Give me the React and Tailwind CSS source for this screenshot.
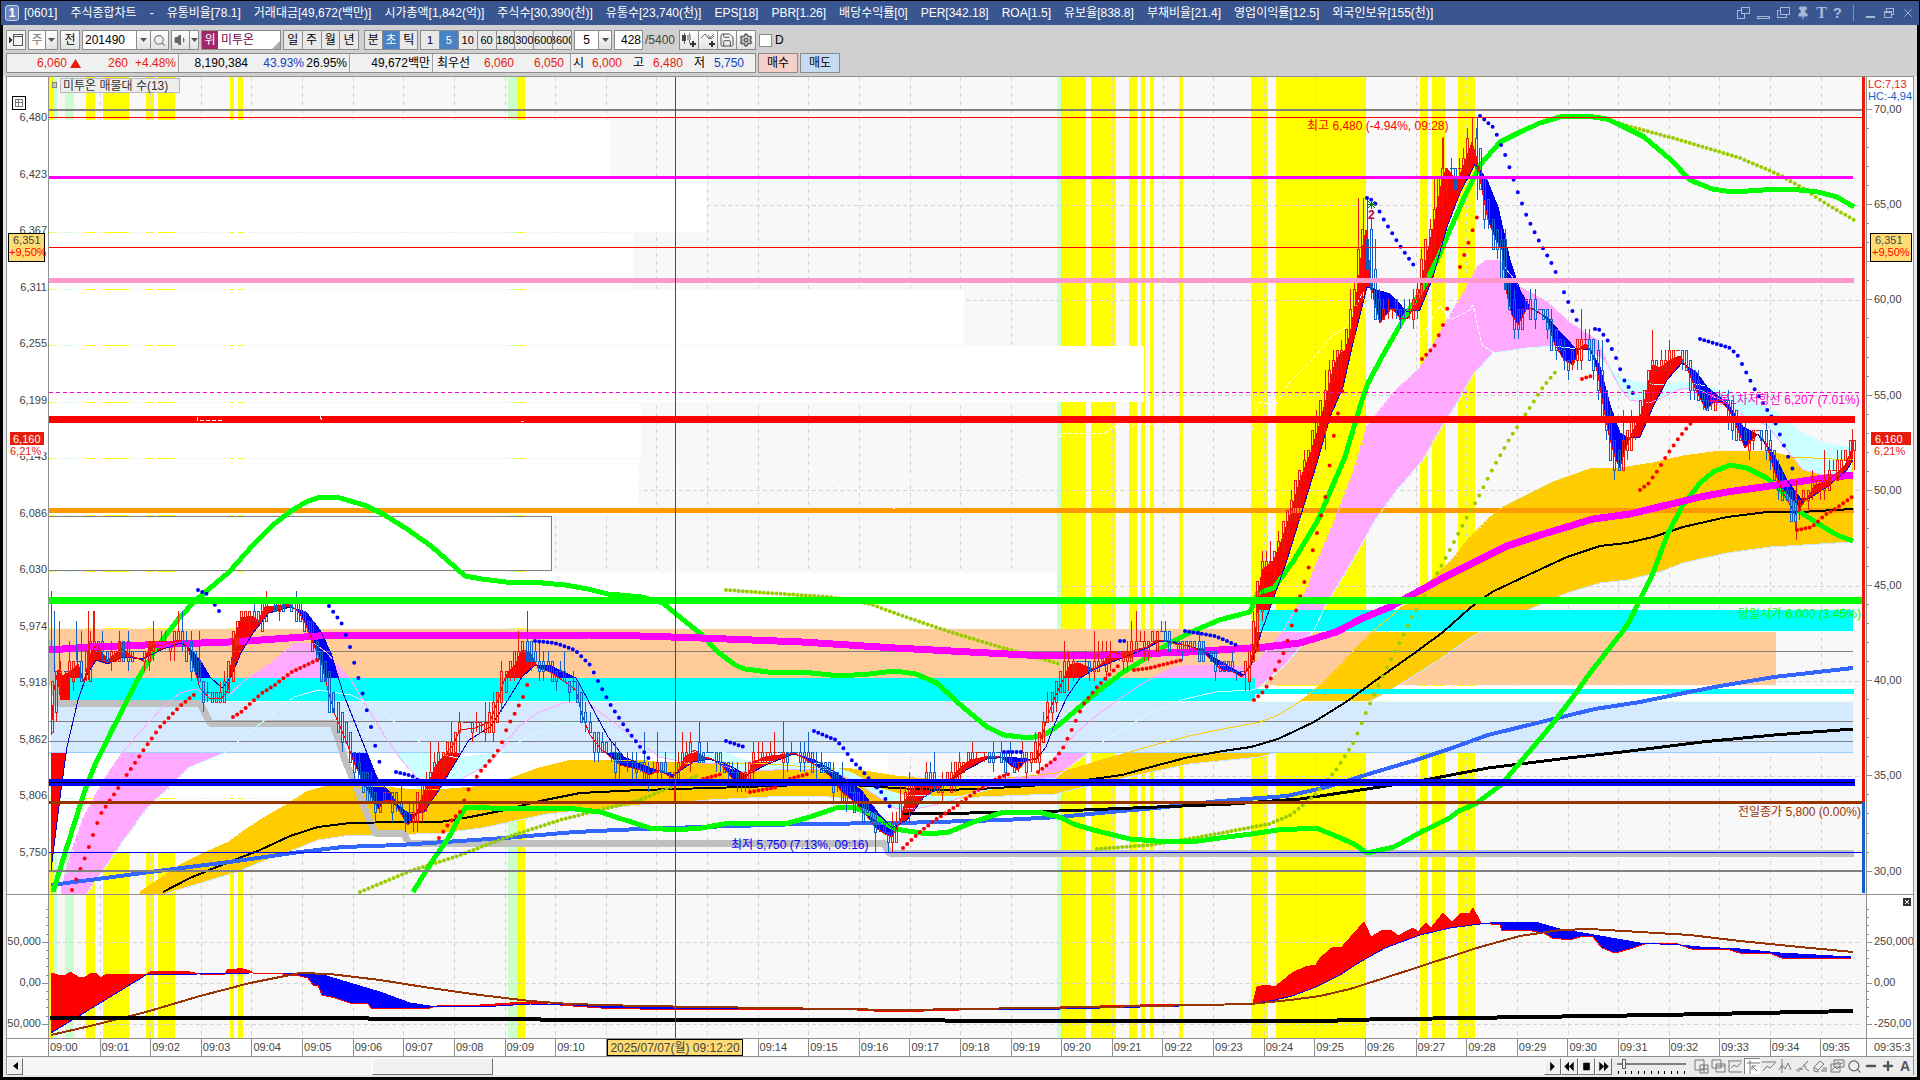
import { Fragment } from "react";
import { Search, Volume1, Save, Settings, Pin, X, Minus, Plus } from "lucide-react";

const FONT = "font-['Liberation_Sans','Noto_Sans_CJK_KR',sans-serif]";

// "x,y x,y ..." -> [[x, y], ...]
const pts = (str) => str.trim().split(/\s+/).map((p) => p.split(",").map(Number));

const valueAt = (line, x) => {
  if (x <= line[0][0]) return line[0][1];
  for (let i = 1; i < line.length; i++) {
    if (x <= line[i][0]) {
      const [x0, y0] = line[i - 1];
      const [x1, y1] = line[i];
      return y0 + ((y1 - y0) * (x - x0)) / (x1 - x0 || 1);
    }
  }
  return line[line.length - 1][1];
};

// vertical strokes between two lines, split by which one is on top
const fillBetween = (a, b, step, from, to) => {
  let up = "";
  let down = "";
  for (let x = from; x <= to; x += step) {
    const ya = Math.round(valueAt(a, x));
    const yb = Math.round(valueAt(b, x));
    if (ya < yb) up += `M${x} ${ya}V${yb}`;
    if (ya > yb) down += `M${x} ${yb}V${ya}`;
  }
  return { up, down };
};

const dotPath = (line, step) => {
  let d = "";
  for (let x = line[0][0]; x <= line[line.length - 1][0]; x += step) {
    d += `M${x.toFixed(1)} ${valueAt(line, x).toFixed(1)}h0.01`;
  }
  return d;
};

const noise = (i) => {
  const v = Math.sin(i * 12.9898) * 43758.5453;
  return v - Math.floor(v);
};

const BANDS = [
  [49, 4, 1], [53, 4, 0], [65, 9, 0], [86, 9, 1], [103, 26, 1], [146, 8, 1], [158, 17, 1],
  [230, 4, 1], [238, 5, 1], [508, 9, 0], [517, 8, 1], [1057, 4, 0], [1061, 25, 1], [1091, 25, 1],
  [1129, 8, 1], [1141, 4, 1], [1150, 4, 1], [1179, 4, 1], [1251, 17, 1], [1276, 90, 1],
  [1420, 8, 1], [1432, 13, 1], [1458, 17, 1],
];

const PROFILE = [
  [120, 56, 610], [177, 55, 707], [233, 56, 633], [290, 55, 964], [346, 56, 1144], [403, 55, 641],
  [459, 56, 639], [516, 55, 551], [572, 56, 1057], [686, 55, 1853], [742, 56, 888], [799, 54, 430],
];

const PRICE = pts(`51,735 54,690 58,670 62,676 70,672 78,664 84,682 90,655 96,645 108,660 122,648 130,655 143,661
150,647 163,645 180,640 188,648 194,668 200,688 210,699 222,698 228,690 234,640 241,618 253,616 258,622 265,607
275,606 290,604 300,614 306,625 316,650 322,665 328,690 335,715 345,738 355,765 365,785 372,798 378,809 385,800
392,800 400,812 408,825 416,815 422,797 430,780 436,765 445,755 453,745 460,730 475,728 490,722 498,700 506,675
515,665 522,650 530,652 538,668 550,672 565,682 576,690 582,715 590,735 600,748 608,755 620,765 640,770 650,775
660,770 672,778 680,768 685,757 695,750 702,756 712,759 722,766 732,778 740,784 748,775 753,762 765,757 780,755
795,753 808,761 820,768 830,776 842,792 856,803 866,815 876,828 885,834 892,837 900,822 907,795 917,785 928,781
938,784 949,782 958,770 970,760 985,757 1000,756 1010,765 1018,770 1025,762 1036,758 1042,735 1050,710 1056,695
1063,680 1070,665 1078,663 1086,666 1094,669 1104,662 1112,652 1122,655 1135,650 1147,647 1157,640 1166,640
1175,644 1190,646 1203,652 1213,662 1222,670 1233,672 1242,677 1250,665 1255,640 1258,600 1262,570 1268,565
1274,560 1280,545 1290,515 1300,480 1310,455 1318,430 1326,400 1333,370 1339,355 1345,350 1350,335 1356,300
1362,250 1366,230 1370,270 1374,300 1380,323 1386,315 1392,308 1400,318 1408,318 1414,305 1420,290 1428,250
1434,225 1440,190 1446,168 1452,175 1458,180 1464,165 1472,142 1477,160 1482,190 1488,220 1496,240 1502,250
1506,290 1512,315 1518,325 1526,310 1532,308 1540,313 1547,320 1555,345 1564,360 1573,365 1580,348 1586,344
1592,352 1598,375 1604,410 1610,440 1616,460 1620,468 1625,450 1630,437 1640,418 1646,395 1652,365 1660,368
1670,360 1680,356 1688,370 1696,390 1706,410 1714,402 1722,402 1730,412 1738,430 1745,448 1752,440 1758,434
1766,443 1774,470 1782,490 1790,505 1796,515 1802,505 1808,497 1815,485 1825,482 1835,475 1845,465 1853,447`);

const AVERAGE = pts(`51,870 61,790 67,747 78,700 86,677 96,660 108,664 122,657 143,659 163,649 180,643 188,647 200,660
210,677 222,688 231,677 241,653 253,633 269,613 290,607 306,612 320,630 331,653 343,693 355,723 367,753 378,780
388,790 398,805 410,815 424,812 439,790 449,773 469,740 490,727 506,703 522,677 535,665 551,666 576,678 588,700
608,737 624,757 650,768 674,775 693,762 709,759 726,764 747,775 768,764 794,754 815,760 836,773 861,790 878,813
892,828 907,820 924,797 949,782 966,770 987,759 1008,757 1036,760 1046,747 1055,723 1067,697 1080,678 1097,668
1122,658 1147,648 1160,641 1177,643 1202,650 1223,663 1244,675 1252,663 1262,630 1274,597 1287,560 1300,518
1317,463 1330,417 1343,387 1353,343 1367,287 1377,290 1390,294 1407,312 1420,310 1433,277 1447,227 1460,193
1475,164 1487,180 1498,207 1510,260 1520,290 1530,308 1547,317 1560,332 1575,348 1590,350 1600,367 1610,405
1620,433 1628,438 1640,437 1653,407 1667,380 1682,363 1697,373 1707,387 1727,403 1743,427 1758,435 1773,453
1787,480 1800,498 1810,498 1827,487 1847,470 1853,460`);

const SPAN_A = pts(`61,892 71,853 84,817 102,783 122,753 139,733 163,707 180,693 196,689 208,695 224,700 245,680 261,670
278,657 294,644 314,643 327,653 351,680 367,707 384,735 400,758 416,777 433,784 453,783 465,777 490,763 502,748
518,727 539,712 567,702 588,703 604,715 634,738 659,757 684,762 718,764 743,772 789,769 827,769 852,780 895,808
920,808 949,802 979,790 1004,779 1038,776 1055,757 1076,733 1097,715 1118,700 1143,683 1172,668 1189,665 1223,665
1248,667 1256,663 1282,633 1305,593 1318,560 1335,520 1353,473 1367,427 1393,393 1420,368 1447,320 1467,287
1477,267 1487,260 1500,261 1520,287 1547,302 1570,323 1597,340 1607,363 1620,388 1630,400 1650,403 1667,395
1683,388 1700,390 1727,403 1747,418 1767,425 1787,450 1803,470 1823,475 1853,473`);

const SPAN_B = pts(`61,940 88,892 122,843 147,808 163,793 188,768 224,753 261,723 294,697 318,690 351,695 376,707 408,733
433,752 457,758 502,752 535,733 563,722 588,722 610,730 642,745 676,752 726,753 743,760 789,763 819,763 852,773
878,788 903,795 958,797 979,792 1021,782 1055,778 1076,762 1105,740 1147,715 1181,700 1215,692 1252,690 1260,687
1287,663 1314,630 1327,603 1353,560 1375,520 1397,490 1423,460 1440,430 1460,398 1473,375 1493,353 1527,348
1553,346 1587,350 1600,357 1620,377 1640,383 1663,385 1683,382 1707,386 1733,393 1757,402 1780,415 1800,432
1823,443 1853,448`);

const CLOUD_TOP = pts(`140,892 180,865 204,853 229,842 245,830 265,817 286,805 306,792 327,786 384,787 416,790 449,789
473,787 506,780 539,768 571,760 640,760 655,762 684,763 768,764 810,767 852,769 895,776 937,780 979,780 1021,777
1055,773 1076,768 1105,759 1130,752 1147,747 1189,736 1223,729 1260,722 1278,715 1298,703 1318,687 1345,660
1372,632 1396,612 1421,590 1452,560 1470,537 1487,520 1503,507 1527,495 1553,482 1593,468 1620,468 1653,463
1683,456 1720,451 1767,451 1793,457 1853,460`);

const CLOUD_BOTTOM = pts(`140,905 171,892 204,882 237,872 261,862 286,853 318,840 351,835 392,835 441,833 482,828 514,821
547,814 640,805 709,800 768,797 819,796 869,801 895,804 979,797 1055,794 1105,782 1147,773 1189,764 1260,757
1274,753 1300,743 1336,723 1367,703 1385,693 1412,677 1443,657 1470,638 1488,628 1528,610 1567,593 1600,583
1627,580 1660,572 1683,563 1727,553 1770,547 1853,542`);

const BAND_UPPER = `53,892 65,853 84,793 94,767 112,730 139,677 157,647 180,617 196,600 229,572 253,545 273,525 291,511
306,502 320,497 340,498 364,505 383,514 407,529 431,546 447,560 465,576 482,579 506,582 531,582 565,585 588,589
608,594 642,597 663,603 676,614 701,634 718,652 735,665 745,669 768,672 802,672 840,676 869,674 895,671 916,674
937,683 956,701 970,713 987,727 1004,735 1029,738 1044,735 1059,725 1076,710 1097,692 1122,673 1143,660 1168,644
1189,633 1219,620 1250,612 1258,593 1274,588 1294,560 1318,520 1335,480 1345,457 1356,420 1362,400 1368,383
1383,355 1403,320 1423,288 1437,260 1450,230 1463,200 1480,165 1500,142 1520,132 1540,123 1560,117 1587,116
1607,119 1620,125 1644,137 1671,160 1690,180 1712,189 1733,192 1763,190 1790,189 1818,192 1837,197 1854,207`;

const BAND_LOWER = `413,892 433,860 449,837 459,818 466,807 490,808 575,809 600,812 625,820 650,828 676,830 701,828 730,823
785,824 810,817 836,808 852,807 869,813 895,829 928,834 949,832 979,820 1004,812 1038,812 1059,817 1076,825
1101,832 1130,839 1156,841 1198,841 1227,837 1251,834 1278,830 1316,828 1336,836 1354,844 1367,853 1394,847
1421,832 1448,819 1459,811 1477,803 1501,785 1528,753 1550,727 1573,697 1590,673 1608,650 1626,627 1640,600
1653,573 1668,533 1683,505 1700,483 1713,472 1730,465 1747,468 1767,478 1783,493 1800,512 1817,523 1837,535
1853,541`;

const MAGENTA_MA = `49,650 90,647 229,642 261,640 318,636 588,635 640,636 701,638 802,642 895,648 970,652 1046,656 1105,655
1189,652 1265,647 1300,643 1336,632 1363,618 1390,607 1421,590 1443,578 1479,560 1507,546 1540,535 1567,527
1593,519 1630,514 1667,505 1700,497 1727,492 1770,486 1817,479 1853,475`;

const BLUE_MA = `51,885 90,880 150,872 229,862 300,852 343,847 400,845 505,838 575,832 640,829 700,827 802,824 900,823
1004,820 1059,817 1110,812 1156,808 1220,801 1287,796 1327,787 1372,773 1416,760 1452,748 1488,735 1541,722
1595,709 1640,702 1684,693 1720,686 1774,677 1853,668`;

const LONG_MA = `903,814 970,813 1059,811 1231,804 1300,799 1367,789 1430,779 1488,768 1568,758 1622,752 1702,742 1774,735
1853,729`;

const MID_MA = `163,892 190,878 229,862 260,850 290,836 318,827 350,823 400,822 440,822 470,817 505,810 540,801 580,793
640,790 676,789 744,787 802,785 852,785 895,788 940,790 979,789 1030,786 1071,782 1122,775 1147,768 1189,757
1223,751 1251,747 1278,739 1314,722 1349,700 1372,683 1416,652 1443,632 1470,608 1492,592 1528,575 1567,557
1600,546 1627,543 1653,537 1683,527 1727,517 1767,512 1800,512 1853,509`;

const SUPPORT = "49,640 57,703 200,703 210,723 333,723 345,760 375,833 403,833 409,843 884,843 889,853 1854,853";

const LAGGING = `637,474 663,474 670,478 676,475 680,466 697,466 702,471 722,471 727,479 735,484 745,476 751,467 772,467
785,471 789,463 805,468 815,472 830,477 840,489 852,485 862,494 874,501 886,501 894,509 900,493 911,477 915,485
922,476 930,480 950,480 966,469 971,481 977,468 990,473 1000,468 1013,478 1027,470 1036,473 1043,450 1050,445
1063,433 1085,433 1105,433 1115,426 1120,434 1133,426 1152,424 1175,433 1190,430 1200,438 1208,447 1220,440
1225,448 1230,438 1240,459 1252,430 1258,402 1275,405 1290,382 1310,362 1333,335 1345,328 1363,292 1370,355
1405,343 1423,335 1440,305 1450,320 1470,310 1473,305 1482,345 1497,355 1502,388 1530,380 1560,398 1590,398
1598,420`;

const BLUE_DOTS = [
  "198,590 207,594 215,605 223,617",
  "329,606 342,624 350,647 354,662 363,695 371,727 375,745 380,764",
  "396,772 412,776 420,782",
  "535,641 555,643 575,650 590,665 600,685 610,704 625,727 650,760",
  "726,741 747,748",
  "814,731 836,740 845,750 853,762 860,768 870,780 882,793 890,807",
  "1004,752 1022,752", "1120,641 1126,641", "1185,631 1215,636 1236,645",
  "1367,198 1374,201 1384,220 1400,246 1417,270",
  "1480,116 1494,128 1506,157 1517,190 1527,217 1540,243 1552,264 1561,284 1565,295 1578,323",
  "1595,329 1600,330 1608,341 1616,358 1625,382 1637,399",
  "1700,339 1730,348 1738,356 1747,374 1755,390 1764,405 1775,422 1785,448 1793,470",
];

const RED_DOTS = [
  "72,890 86,855 100,815 117,790 126,776 147,745 160,727 180,706 195,694",
  "233,717 240,713 252,702 262,693 275,685 290,673 317,660",
  "439,838 449,823 460,812 468,790 480,772 492,758 500,748 507,728 515,713 523,697 530,677",
  "703,779 722,774", "750,792 778,787", "790,779 811,773",
  "903,848 920,832 935,820 958,805 975,792 1000,777 1012,773",
  "1038,772 1055,759 1063,748 1073,727 1083,705 1097,687 1109,675 1119,665",
  "1134,670 1150,668 1165,664 1182,660",
  "1254,700 1265,690 1275,670 1285,650 1297,607 1308,570 1325,500 1333,440 1343,387",
  "1422,359 1434,347 1443,325 1451,294", "1460,267 1468,244 1477,217", "1582,379 1591,376",
  "1640,490 1648,484 1658,470 1667,455 1678,439 1690,424 1697,419",
  "1797,530 1812,527 1825,515 1838,507 1852,497",
];

const OLIVE_DOTS = [
  "360,892 413,870 455,857 505,838 560,820 600,810 640,800 697,776",
  "726,590 768,593 830,597 870,604 900,615 950,632 1000,647 1060,664",
  "1097,849 1150,845 1200,837 1269,824 1291,815 1314,796 1336,770 1354,742 1367,710 1374,695 1387,667 1401,640 1412,617 1425,595 1443,563 1468,515 1477,500 1493,468 1510,438 1527,412 1543,387 1557,370",
  "1610,120 1628,126 1680,140 1740,158 1780,175 1804,189 1825,203 1854,220",
];

const OSC_FAST = pts(`51,973 58,975 65,976 70,972 78,977 85,977 92,973 97,974 101,978 106,974 146,975 151,971 190,972
200,974 224,975 228,969 235,970 240,968 250,971 253,973 275,973 300,976 308,978 313,985 318,985 322,995 335,998
350,1003 368,1004 372,1009 385,1008 400,1009 430,1008 440,1005 480,1005 525,1002 560,1005 600,1008 640,1009
700,1009 840,1009 890,1012 960,1010 1060,1007 1140,1005 1250,1004 1253,1003 1257,987 1266,985 1275,987 1292,973
1305,967 1316,965 1320,958 1333,947 1342,947 1348,940 1364,922 1371,937 1383,930 1392,931 1398,936 1413,928
1418,932 1426,923 1431,928 1443,913 1452,922 1461,913 1470,913 1473,908 1481,923 1500,925 1502,931 1526,930
1544,933 1552,938 1570,940 1583,936 1593,937 1602,948 1615,953 1630,949 1648,943 1678,944 1691,949 1730,950
1743,954 1769,953 1782,958 1851,958`);

const OSC_SLOW = pts(`51,1033 146,975 250,973 300,973 320,974 350,983 380,992 410,1003 430,1006 480,1007 530,1004 580,1005
640,1007 700,1008 900,1010 1060,1009 1180,1006 1250,1004 1275,1000 1292,996 1316,987 1340,975 1360,962 1385,948
1420,935 1450,928 1480,924 1500,922 1535,922 1560,929 1600,936 1640,943 1680,945 1700,947 1740,949 1780,953
1851,957`);

const OSC_SIGNAL = `51,1035 90,1026 146,1012 200,996 250,983 300,973 330,974 380,980 430,988 480,995 530,1001 570,1004
640,1006 900,1010 1100,1007 1250,1004 1290,1000 1320,996 1350,989 1400,973 1440,960 1480,947 1520,936 1560,930
1590,929 1640,932 1690,935 1740,941 1800,947 1853,952`;

const OSC_BASE = "50,1018 368,1018 369,1019 540,1019 541,1020 1337,1021 1338,1020 1465,1018 1660,1015 1853,1011";

const TICK = 10.06;
const snap = (y, up) => {
  const k = (852.5 - y) / TICK;
  return Math.round(852.5 - (up ? Math.ceil(k) : Math.floor(k)) * TICK);
};

const buildCandles = () => {
  let rise = "";
  let fall = "";
  let i = 0;
  for (let x = 52; x < 1855; x += 4.2) {
    i++;
    const px = Math.round(x);
    const open = valueAt(PRICE, x - 4);
    const close = valueAt(PRICE, x + 3);
    const isUp = close < open - 1 || (Math.abs(close - open) <= 1 && noise(i) > 0.5);
    const top = snap(Math.min(open, close), true);
    const bottom = snap(Math.max(open, close), noise(i + 9) > 0.5);
    let hi = top - (noise(i + 3) > 0.6 ? TICK : 0) - (noise(i + 5) > 0.9 ? TICK * 2 : 0);
    let lo = bottom + (noise(i + 7) > 0.6 ? TICK : 0) + (noise(i + 11) > 0.9 ? TICK : 0);
    hi = Math.max(117, Math.round(hi));
    lo = Math.min(852, Math.round(lo));
    let d;
    if (bottom - top < 4) {
      d = `M${px + 0.5} ${hi}V${lo}M${px - 1} ${top + 0.5}h4`;
    } else {
      d = `M${px - 0.5} ${top + 0.5}h2V${bottom + 0.5}h-2zM${px + 0.5} ${hi}V${top}M${px + 0.5} ${bottom}V${lo}`;
    }
    if (isUp) rise += d;
    else fall += d;
  }
  // opening spikes and the two peaks
  fall += "M51.5 591V650M54.500 611V672M59.500 621V690M76.500 621V660M93.500 611V655M1367.500 198V240M1477.500 117V200";
  rise += "M88.500 611V680M1358.500 198V250M1363.500 198V240M1443.500 137V190M1472.500 117V150M1796.500 480V540M1852.500 429V450";
  return { rise, fall };
};

const candles = buildCandles();
const trend = fillBetween(PRICE, AVERAGE, 1, 51.5, 1853);
const spans = fillBetween(SPAN_A, SPAN_B, 3, 62.5, 1853);
const cloud = fillBetween(CLOUD_TOP, CLOUD_BOTTOM, 3, 141.5, 1853);
const osc = fillBetween(OSC_FAST, OSC_SLOW, 1, 51.5, 1851);

const join = (line) => line.map((p) => p.join(",")).join(" ");
const STEP = 1771.7 / 35;

const Line = ({ points, color, width = 1, dash }) => (
  <polyline points={points} fill="none" stroke={color} strokeWidth={width} strokeDasharray={dash} strokeLinejoin="round" />
);

const Level = ({ y, color, h = 1, from = 49, to = 1862 }) => (
  <rect x={from} y={y} width={to - from} height={h} fill={color} />
);

const Dots = ({ runs, color }) => (
  <g stroke={color} strokeWidth="4" strokeLinecap="round" shapeRendering="auto">
    {runs.map((d) => <path key={d} d={dotPath(pts(d), 4.2)} />)}
  </g>
);

const Backdrop = ({ top, bottom, rows }) => (
  <>
    <rect x="49" y={top} width="1817" height={bottom - top} fill="#f8f8f8" />
    {BANDS.map(([x, w, strong]) => (
      <rect key={x} x={x} y={top} width={w} height={bottom - top} fill={strong ? "#ffff00" : "#ccffcc"} />
    ))}
    {Array.from({ length: 35 }, (_, i) => (
      <path key={i} d={`M${Math.round(49 + STEP * (i + 1)) + 0.5} ${top}V${bottom}`} stroke="#d4d4d4" strokeDasharray="4 4" />
    ))}
    {rows.map((y) => (
      <path key={y} d={`M49 ${y + 0.5}H1862`} stroke="#d4d4d4" strokeDasharray="4 3" />
    ))}
  </>
);

const PricePlot = () => (
  <svg
    viewBox="49 77 1817 817"
    preserveAspectRatio="none"
    shapeRendering="crispEdges"
    className="block h-full w-full text-[12px]"
    role="img"
    aria-label="미투온 가격 차트"
  >
    <Backdrop top={77} bottom={894} rows={[205, 300, 395, 490, 586, 681, 776]} />
    {PROFILE.map(([y, h, to]) => (
      <rect key={y} x="49" y={y} width={to - 49} height={h} fill="#fff" />
    ))}
    <path d="M49 516.5H551.5V570.5H49" fill="none" stroke="#808080" />
    <rect x="49" y="629" width="1727" height="56" fill="#ffcc99" />

    <path d={cloud.up} stroke="#ffcc00" strokeWidth="3" />
    <Line points={join(CLOUD_BOTTOM)} color="#cce6ff" />
    <path d={spans.up} stroke="#ffaaff" strokeWidth="3" />
    <path d={spans.down} stroke="#ccffff" strokeWidth="3" />
    <path d={trend.up} stroke="#ff0000" />
    <path d={trend.down} stroke="#0000ff" />

    <rect x="70" y="678" width="1185" height="23" fill="#00ffff" />
    <rect x="1256" y="610" width="597" height="21" fill="#00ffff" />
    <Level y={631} color="#e0ffff" from={1256} to={1853} />
    <rect x="51" y="701" width="1802" height="51" fill="#d6eaff" />
    <Level y={701} color="#e8ffe8" to={1853} />
    <Level y={752} color="#99ccff" to={1853} />
    <Line points={SUPPORT} color="#c0c0c0" width={7} />
    <Level y={689} h={5} color="#00ffff" from={1254} to={1854} />
    <Level y={651} color="#808080" to={1853} />
    <Level y={721} color="#808080" to={1853} />
    <Level y={741} color="#808080" to={1853} />
    <Level y={508} h={5} color="#ff9900" to={1854} />

    <Line points={join(CLOUD_TOP)} color="#ffcc00" />
    <Line points={join(SPAN_A)} color="#ffaaff" />
    <Line points={join(SPAN_B)} color="#ccffff" />
    <Line points={LAGGING} color="#ffffff" dash="4 2" />
    <Line points={MID_MA} color="#000" width={2} />
    <Line points={BLUE_MA} color="#3366ff" width={4} />
    <Line points={LONG_MA} color="#000" width={3} />
    <Dots runs={OLIVE_DOTS} color="#99cc00" />
    <Line points={BAND_UPPER} color="#00ff00" width={5} />
    <Line points={BAND_LOWER} color="#00ff00" width={5} />
    <Line points={MAGENTA_MA} color="#ff00ff" width={7} />
    <Line points={join(AVERAGE)} color="#0000c8" />
    <Line points={join(PRICE)} color="#ff0000" />
    <path d={candles.rise} fill="none" stroke="#e81c0c" />
    <path d={candles.fall} fill="none" stroke="#1460c8" />
    <Dots runs={BLUE_DOTS} color="#0000ff" />
    <Dots runs={RED_DOTS} color="#ff0000" />

    <Level y={109} h={2} color="#808080" />
    <Level y={117} color="#ff0000" />
    <Level y={176} h={3} color="#ff00ff" to={1853} />
    <Level y={247} color="#ff0000" />
    <Level y={278} h={5} color="#ff99cc" to={1854} />
    <path d="M49 392.5H1862" stroke="#ff00cc" strokeDasharray="4 3" />
    <Level y={416} h={7} color="#ff0000" to={1855} />
    <path d="M197 417v3h25v-2M320 416l2 5M521 421h3" fill="none" stroke="#fff" strokeDasharray="4 2" />
    <Level y={597} h={7} color="#00ff00" />
    <Level y={779} h={7} color="#0000ff" to={1855} />
    <Level y={782} color="#000" to={1854} />
    <Level y={801} h={3} color="#993300" />
    <Level y={852} color="#0000ff" />
    <Level y={870} h={2} color="#808080" />
    <rect x="1862" y="77" width="3" height="725" fill="#e81c0c" />
    <rect x="1862" y="802" width="3" height="91" fill="#1460c8" />
    <rect x="675" y="77" width="1" height="817" fill="#ff0000" />

    <rect x="60.5" y="78.5" width="119" height="14" fill="#eeeeee" stroke="#b8b8b8" />
    <rect x="52.5" y="82.5" width="4" height="5" fill="#c8c8c8" stroke="#808080" />
    <text x="63" y="90" fill="#333">미투온 매물대 수(13)</text>
    <text x="1307" y="130" fill="#ff0000">최고 6,480 (-4.94%, 09:28)</text>
    <path d="M1367 204h9M1371.5 200v9M1368 201l7 7M1375 201l-7 7" stroke="#008000" />
    <text x="1368" y="219" fill="#c00040" className="font-bold">2</text>
    <text x="731" y="849" fill="#0000ff">최저 5,750 (7.13%, 09:16)</text>
    <text x="1708" y="404" fill="#ff00cc">피봇1차저항선 6,207 (7.01%)</text>
    <text x="1738" y="618" fill="#00ff00">당일시가 6,000 (3.45%)</text>
    <text x="1738" y="816" fill="#993300">전일종가 5,800 (0.00%)</text>
  </svg>
);

const OscPlot = () => (
  <svg
    viewBox="49 895 1817 143"
    preserveAspectRatio="none"
    shapeRendering="crispEdges"
    className="block h-full w-full"
    role="img"
    aria-label="보조지표"
  >
    <Backdrop top={895} bottom={1038} rows={[942, 983, 1024]} />
    <path d={osc.up} stroke="#ff0000" />
    <path d={osc.down} stroke="#0000ff" />
    <Line points={join(OSC_FAST)} color="#ff0000" />
    <Line points={join(OSC_SLOW)} color="#0000ff" />
    <Line points={OSC_SIGNAL} color="#993300" width={2} />
    <Line points={OSC_BASE} color="#000" width={4} />
    <rect x="675" y="895" width="1" height="143" fill="#ff0000" />
  </svg>
);

const LEFT_PRICES = ["6,480", "6,423", "6,367", "6,311", "6,255", "6,199", "6,143", "6,086", "6,030", "5,974", "5,918", "5,862", "5,806", "5,750"];
const RIGHT_VALUES = ["70,00", "65,00", "60,00", "55,00", "50,00", "45,00", "40,00", "35,00", "30,00"];

const LeftAxis = () => (
  <svg viewBox="7 77 41 817" preserveAspectRatio="none" shapeRendering="crispEdges" className="block h-full w-full text-[11px]">
    {LEFT_PRICES.map((p, i) => (
      <text key={p} x="47" y={121 + i * 56.54} textAnchor="end" fill="#444">{p}</text>
    ))}
    <rect x="12.5" y="96.5" width="13" height="13" fill="#fff" stroke="#000" />
    <path d="M15 99.5h8M15 102.5h8M15 106.5h8M15.5 99v8M18.5 99v8M22.5 99v8" stroke="#777" />
    <rect x="8.5" y="233.5" width="36" height="28" fill="#ffdc73" stroke="#000" />
    <text x="13" y="244" fill="#444">6,351</text>
    <text x="9" y="256" fill="#ff0000">+9,50%</text>
    <rect x="7" y="445" width="37" height="11" fill="#fff" />
    <rect x="10" y="432" width="34" height="13" fill="#e81c0c" />
    <text x="13" y="443" fill="#fff">6,160</text>
    <text x="10" y="455" fill="#e81c0c">6,21%</text>
  </svg>
);

const RightAxis = () => (
  <svg viewBox="1867 77 46 817" preserveAspectRatio="none" shapeRendering="crispEdges" className="block h-full w-full text-[11px]">
    {Array.from({ length: 41 }, (_, i) => (
      <path key={i} d={`M1867 ${Math.round(109 + i * 19.04) + 0.5}h${i % 5 === 0 ? 5 : 2}`} stroke="#909090" />
    ))}
    {RIGHT_VALUES.map((v, i) => (
      <text key={v} x="1874" y={113 + i * 95.2} fill="#444">{v}</text>
    ))}
    <text x="1868" y="88" fill="#e81c0c">LC:7,13</text>
    <text x="1868" y="100" fill="#1460c8">HC:-4,94</text>
    <rect x="1870.5" y="233.5" width="41" height="28" fill="#ffdc73" stroke="#000" />
    <text x="1875" y="244" fill="#444">6,351</text>
    <text x="1872" y="256" fill="#ff0000">+9,50%</text>
    <rect x="1871" y="432" width="40" height="13" fill="#e81c0c" />
    <text x="1875" y="443" fill="#fff">6,160</text>
    <text x="1874" y="455" fill="#e81c0c">6,21%</text>
  </svg>
);

const OSC_LABELS = [["250,000", 942], ["0,00", 983], ["-250,000", 1024]];
const oscTicks = Array.from({ length: 15 }, (_, i) => Math.round(909 + i * 8.2) + 0.5);

const OscLeftAxis = () => (
  <svg viewBox="7 895 41 143" preserveAspectRatio="none" shapeRendering="crispEdges" className="block h-full w-full text-[11px]">
    {oscTicks.map((y) => <path key={y} d={`M46 ${y}h2`} stroke="#909090" />)}
    {OSC_LABELS.map(([t, y]) => (
      <Fragment key={t}>
        <path d={`M42 ${y + 0.5}h6`} stroke="#909090" />
        {/* no room for the full figure, keep its last digits */}
        <text x="41" y={y + 3} textAnchor="end" fill="#444">{t.slice(-6)}</text>
      </Fragment>
    ))}
  </svg>
);

const OscRightAxis = () => (
  <svg viewBox="1867 895 46 143" preserveAspectRatio="none" shapeRendering="crispEdges" className="block h-full w-full text-[11px]">
    {oscTicks.map((y) => <path key={y} d={`M1867 ${y}h2`} stroke="#909090" />)}
    {OSC_LABELS.map(([t, y]) => (
      <Fragment key={t}>
        <path d={`M1867 ${y + 0.5}h5`} stroke="#909090" />
        <text x="1874" y={y + 3} fill="#444">{t.slice(0, 7)}</text>
      </Fragment>
    ))}
    <rect x="1903" y="898" width="8" height="8" fill="#333" />
    <path d="M1905 900l4 4M1909 900l-4 4" stroke="#fff" />
  </svg>
);

const TITLE_ITEMS = [
  "[0601]", "주식종합차트", "-", "유통비율[78.1]", "거래대금[49,672(백만)]", "시가총액[1,842(억)]", "주식수[30,390(천)]",
  "유통수[23,740(천)]", "EPS[18]", "PBR[1.26]", "배당수익률[0]", "PER[342.18]", "ROA[1.5]", "유보율[838.8]",
  "부채비율[21.4]", "영업이익률[12.5]", "외국인보유[155(천)]",
];

const WindowIcon = ({ d, w = 14 }) => (
  <svg width={w} height="14" viewBox={`0 0 ${w} 14`} fill="none" stroke="currentColor" shapeRendering="crispEdges">
    <path d={d} />
  </svg>
);

const TitleBar = () => (
  <header className="flex h-6 items-center bg-[#3a5690] px-1 text-[12px] text-white">
    <span className="mr-[5px] flex h-4 w-[14px] items-center justify-center rounded-[3px] border border-[#c8d4ee] bg-[#6d87bd] font-bold">1</span>
    <h1 className="flex flex-1 gap-[13px] whitespace-nowrap">
      {TITLE_ITEMS.map((t) => <span key={t}>{t}</span>)}
    </h1>
    <div className="flex items-center gap-[6px] text-[#a9b6d6]">
      <button aria-label="도킹"><WindowIcon d="M5.5 1.5h8v6h-8zM5 4.5H1.5v8h7V8" /></button>
      <button aria-label="숨기기"><WindowIcon d="M1 10.5h12v2H1z" /></button>
      <button aria-label="복사"><WindowIcon d="M4.5 1.5h9v7h-9zM4 4.5H1.5v7h9V9" /></button>
      <button aria-label="고정"><Pin size={14} fill="currentColor" strokeWidth={2} /></button>
      <button aria-label="글꼴" className="font-['Liberation_Serif',serif] text-[16px] leading-4 font-bold">T</button>
      <button aria-label="도움말" className="text-[15px] leading-4 font-bold">?</button>
      <span className="mx-[5px] h-4 w-px bg-[#8093bd]" />
      <button aria-label="최소화"><WindowIcon w={12} d="M1 10.5h9M1 11.5h9" /></button>
      <button aria-label="복원"><WindowIcon w={12} d="M3.5 5V2.5h7v6H8M1.5 5.5h7v6h-7zM2 6.5h6" /></button>
      <button aria-label="닫기"><X size={14} strokeWidth={1.5} /></button>
    </div>
  </header>
);

const BOX = "flex h-5 border border-[#8c8c8c]";
const CELL = "flex items-center justify-center bg-linear-to-b from-white to-[#e2e2e2]";

const Arrow = () => (
  <svg width="7" height="4" viewBox="0 0 7 4" className="fill-[#555]"><path d="M0 0h7L3.5 4z" /></svg>
);

const ButtonGroup = ({ items, active, width }) => (
  <div className={`${BOX} divide-x divide-[#8c8c8c] ${width}`}>
    {items.map((t) => (
      <button
        key={t}
        className={`flex min-w-0 flex-1 items-center justify-center overflow-hidden ${t === active ? "bg-[#4a80c4] text-white" : "bg-[#e8e8e8]"}`}
      >
        {t}
      </button>
    ))}
  </div>
);

const MainToolbar = () => (
  <div className="flex h-5 items-center gap-[2px]">
    <button aria-label="패널" className={`${BOX} w-5 items-center justify-center bg-[#f4f4f4]`}>
      <svg width="16" height="14" viewBox="0 0 16 14" fill="none" stroke="#555" shapeRendering="crispEdges">
        <path d="M5.5 1.5h9v11h-9zM5 3.5h10" /><path d="M1 4v6l4-3z" fill="#333" stroke="none" />
      </svg>
    </button>
    <div className={`${BOX} w-[30px]`}>
      <span className="flex w-4 items-center justify-center bg-white text-[#777]">주</span>
      <button aria-label="종목 구분" className={`${CELL} flex-1 border-l border-[#8c8c8c]`}><Arrow /></button>
    </div>
    <button className={`h-5 w-5 border border-[#8c8c8c] ${CELL}`}>전</button>
    <div className={`${BOX} w-[87px]`}>
      <input aria-label="종목코드" defaultValue="201490" className="w-[53px] bg-white pl-[2px] outline-none" />
      <button aria-label="종목 목록" className={`${CELL} w-[14px] border-l border-[#8c8c8c]`}><Arrow /></button>
      <button aria-label="검색" className={`${CELL} flex-1 border-l border-[#8c8c8c]`}><Search size={13} color="#777" /></button>
    </div>
    <div className={`${BOX} w-[28px]`}>
      <button aria-label="소리" className={`${CELL} w-[17px]`}><Volume1 size={14} color="#666" fill="#666" /></button>
      <button aria-label="소리 설정" className={`${CELL} flex-1 border-l border-[#8c8c8c]`}><Arrow /></button>
    </div>
    <div className={`${BOX} w-20 items-center bg-white text-[#7a0040]`}>
      <span className="flex h-full w-4 items-center justify-center bg-[#a02868] text-white">위</span>
      <span className="flex-1 pl-[3px]">미투온</span>
      <svg width="8" height="8" viewBox="0 0 8 8" className="self-end fill-[#aaa]"><path d="M8 0v8H0z" /></svg>
    </div>
    <ButtonGroup items={["일", "주", "월", "년"]} width="w-[76px] mr-[3px]" />
    <ButtonGroup items={["분", "초", "틱"]} active="초" width="w-[54px]" />
    <ButtonGroup items={["1", "5", "10", "60", "180", "300", "600", "3600"]} active="5" width="w-[152px] text-[11px]" />
    <div className={`${BOX} w-[38px]`}>
      <input aria-label="주기" defaultValue="5" className="w-[23px] bg-white text-center outline-none" />
      <button aria-label="주기 목록" className={`${CELL} flex-1 border-l border-[#8c8c8c]`}><Arrow /></button>
    </div>
    <input aria-label="봉 개수" defaultValue="428" className="h-5 w-[29px] border border-[#8c8c8c] bg-white pr-px text-right outline-none" />
    <span className="w-8 text-[12px] text-[#444]">/5400</span>
    <div className={`${BOX} w-[77px] divide-x divide-[#8c8c8c]`}>
      <button aria-label="봉 추가" className={`${CELL} flex-1`}>
        <svg width="16" height="16" viewBox="0 0 16 16" shapeRendering="crispEdges">
          <path d="M3 1v11M8 1v10" stroke="#666" /><path d="M1 3h4v6H1z" fill="#444" /><path d="M6 3h4v5H6z" fill="#aaa" />
          <path d="M12 9v6M9 12h6" stroke="#333" strokeWidth="2" />
        </svg>
      </button>
      <button aria-label="지표 추가" className={`${CELL} flex-1`}>
        <svg width="16" height="16" viewBox="0 0 16 16" fill="none" stroke="#666">
          <path d="M1 6l4-4 4 5 5-5M8 3l3 4 3-3" /><path d="M12 9v6M9 12h6" stroke="#333" strokeWidth="2" />
        </svg>
      </button>
      <button aria-label="저장" className={`${CELL} flex-1`}><Save size={16} color="#555" strokeWidth={1.5} /></button>
      <button aria-label="설정" className={`${CELL} flex-1`}><Settings size={14} color="#666" strokeWidth={3} /></button>
    </div>
    <label className="ml-px flex items-center gap-[3px]">
      <input type="checkbox" className="h-[13px] w-[13px] appearance-none border border-[#8c8c8c] bg-white" />D
    </label>
  </div>
);

const Num = ({ w, color = "text-black", children }) => <span className={`shrink-0 text-right ${w} ${color}`}>{children}</span>;
const Bar = () => <span className="h-full w-px shrink-0 bg-[#a0a0a0]" />;
const RED = "text-[#e81c0c]";

const QuoteBar = () => (
  <div className="flex h-5 items-center gap-[2px]">
    <div className={`${BOX} w-[750px] items-center bg-[#f0f0f0] whitespace-nowrap`}>
      <Num w="w-[60px]" color={RED}>6,060</Num>
      <svg width="11" height="9" viewBox="0 0 11 9" className="ml-[3px] shrink-0 fill-[#e81c0c]"><path d="M5.5 0L11 9H0z" /></svg>
      <Num w="w-[47px]" color={RED}>260</Num>
      <Num w="w-12" color={RED}>+4.48%</Num>
      <span className="w-[2px]" /><Bar />
      <Num w="w-[69px]">8,190,384</Num>
      <Num w="w-[56px]" color="text-[#1440c0]">43.93%</Num>
      <Num w="w-[43px]">26.95%</Num>
      <span className="w-[2px]" /><Bar />
      <Num w="w-20">49,672백만</Num>
      <span className="w-[2px]" /><Bar />
      <Num w="w-[37px]">최우선</Num>
      <Num w="w-[44px]" color={RED}>6,060</Num>
      <Num w="w-[50px]" color={RED}>6,050</Num>
      <span className="w-[6px]" /><Bar />
      <Num w="w-[13px]">시</Num>
      <Num w="w-[38px]" color={RED}>6,000</Num>
      <Num w="w-[22px]">고</Num>
      <Num w="w-[39px]" color={RED}>6,480</Num>
      <Num w="w-[22px]">저</Num>
      <Num w="w-[39px]" color="text-[#1440c0]">5,750</Num>
    </div>
    <button className="h-5 w-10 border border-[#8c8c8c] bg-[#f6d0ca]">매수</button>
    <button className="h-5 w-10 border border-[#8c8c8c] bg-[#c5dcf2]">매도</button>
  </div>
);

const TimeAxis = () => (
  <div className="flex h-[18px] items-stretch border-t border-[#909090] bg-white text-[11px] text-[#444]">
    <div className="w-[42px] shrink-0 border-r border-[#909090]" />
    <div className="relative grid flex-1 grid-cols-[repeat(35,minmax(0,1fr))_minmax(0,0.9fr)]">
      {Array.from({ length: 36 }, (_, i) => (
        <span key={i} className={`flex items-center pl-px ${i ? "border-l border-[#909090]" : ""}`}>
          {/* the cursor label sits over these three */}
          {i < 11 || i > 13 ? `09:${String(i).padStart(2, "0")}` : ""}
        </span>
      ))}
      <span className="absolute top-0 left-[558px] flex h-[17px] w-[136px] items-center justify-center border border-black bg-[#ffdc73] text-[12px] whitespace-nowrap">
        2025/07/07(월) 09:12:20
      </span>
    </div>
    <div className="flex w-[47px] shrink-0 items-center overflow-hidden border-l border-[#909090] pl-[7px] whitespace-nowrap">09:35:3</div>
  </div>
);

const RAISED = "flex items-center justify-center border border-t-white border-l-white border-r-[#707070] border-b-[#707070] bg-[#f0f0f0]";

const PLAYER = [
  ["재생", "M5 3l5 5-5 5z"],
  ["뒤로", "M7 3L2 8l5 5zM12 3L7 8l5 5z"],
  ["정지", "M4 4h7v8H4z"],
  ["앞으로", "M3 3l5 5-5 5zM8 3l5 5-5 5z"],
];

const TOOLS = [
  ["창 추가", "M2 2h9v10H2zM7 7h8v8H7zM11 7v8M7 11h8"],
  ["창 겹치기", "M2 2h9v8H2zM6 6h9v8H6zM6 8h9"],
  ["추세 영역", "M2 2v12M2 14h13M2 3h13M4 10l3-3 3 2 4-4"],
  ["십자선", "M2 4h13M5 1v14M7 7l5 5M7 7v4M7 7h4"],
  ["수평선", "M1 4h14M2 13l4-5 3 2 5-5"],
  ["수직선", "M4 1v14M1 12l3-5 3 4 3-6 3 7"],
  ["추세선", "M1 13l4-3 3 2M3 14L13 3M9 6l2 5 3 2"],
  ["전체 삭제", "M2 9l6-6 4 3-6 6zM2 9v4l4 1v-3M12 9v5M14 9v5M10 11v3"],
  ["다중 차트", "M5 2h10v7H5zM2 6h9v8H2zM3 12l3-3 2 2 3-3M6 6l3-2 3 2 2-2"],
];

const BottomBar = () => (
  <div className="flex h-[19px] items-center border-t border-[#909090] bg-[#ececec]">
    <button aria-label="왼쪽으로" className={`${RAISED} h-[17px] w-4`}>
      <svg width="5" height="8" viewBox="0 0 5 8"><path d="M5 0v8L0 4z" /></svg>
    </button>
    <div className="h-[17px] flex-1 bg-[#f6f6f6]">
      <button aria-label="스크롤" className={`${RAISED} ml-[349px] h-[17px] w-[121px]`} />
    </div>
    {PLAYER.map(([name, d]) => (
      <button key={name} aria-label={name} className={`${RAISED} h-[17px] w-[17px]`}>
        <svg width="15" height="15" viewBox="0 0 15 16"><path d={d} /></svg>
      </button>
    ))}
    <div className="ml-[5px] flex w-[69px] flex-col gap-[2px]">
      <input
        type="range"
        aria-label="재생 속도"
        defaultValue="8"
        className="h-[10px] w-full appearance-none bg-[linear-gradient(#808080,#808080)] bg-size-[100%_2px] bg-center bg-no-repeat [&::-webkit-slider-thumb]:h-[10px] [&::-webkit-slider-thumb]:w-1 [&::-webkit-slider-thumb]:appearance-none [&::-webkit-slider-thumb]:border [&::-webkit-slider-thumb]:border-[#606060] [&::-webkit-slider-thumb]:bg-[#f0f0f0]"
      />
      <div className="flex justify-between px-px">
        {Array.from({ length: 11 }, (_, i) => <span key={i} className="h-[3px] w-px bg-black" />)}
      </div>
    </div>
    <div className="ml-[7px] flex items-center gap-px">
      {TOOLS.map(([name, d], i) => (
        <button key={name} aria-label={name} className={`h-4 w-4 ${i === 3 ? "border-t border-l border-[#808080] bg-white" : ""}`}>
          <svg width="16" height="16" viewBox="0 0 16 16" fill="none" stroke="#777"><path d={d} /></svg>
        </button>
      ))}
      <button aria-label="확대" className="flex w-4 justify-center"><Search size={15} color="#666" /></button>
      <button aria-label="줄이기" className="flex w-4 justify-center"><Minus size={14} color="#555" strokeWidth={4} /></button>
      <button aria-label="늘리기" className="flex w-4 justify-center"><Plus size={14} color="#555" strokeWidth={4} /></button>
      <button aria-label="글자" className="w-4 text-[14px] leading-4 font-bold text-[#555]">A</button>
    </div>
  </div>
);

const App = () => (
  <div className={`flex h-screen flex-col overflow-hidden bg-black pt-px pb-[3px] text-[12px] text-black ${FONT}`}>
    <div className="px-px">
      <TitleBar />
    </div>
    <div className="flex min-h-0 flex-1 flex-col border-x-[3px] border-black bg-[#e8e8e8] pb-[2px]">
      <div className="flex flex-col gap-[3px] bg-[#d0d0d0] pt-[5px] pb-[3px] pl-[3px]">
        <MainToolbar />
        <QuoteBar />
      </div>
      <main className="mx-[3px] flex min-h-0 flex-1 flex-col border border-b-0 border-[#909090] bg-white">
        <section className="flex min-h-0 flex-1">
          <div className="w-[42px] shrink-0 border-r border-[#909090]"><LeftAxis /></div>
          <div className="min-w-0 flex-1"><PricePlot /></div>
          <div className="w-[47px] shrink-0 border-l border-[#909090]"><RightAxis /></div>
        </section>
        <section className="flex h-[144px] shrink-0 border-t border-[#909090]">
          <div className="w-[42px] shrink-0 border-r border-[#909090]"><OscLeftAxis /></div>
          <div className="min-w-0 flex-1"><OscPlot /></div>
          <div className="w-[47px] shrink-0 border-l border-[#909090]"><OscRightAxis /></div>
        </section>
        <TimeAxis />
        <BottomBar />
      </main>
    </div>
  </div>
);

export default App;
